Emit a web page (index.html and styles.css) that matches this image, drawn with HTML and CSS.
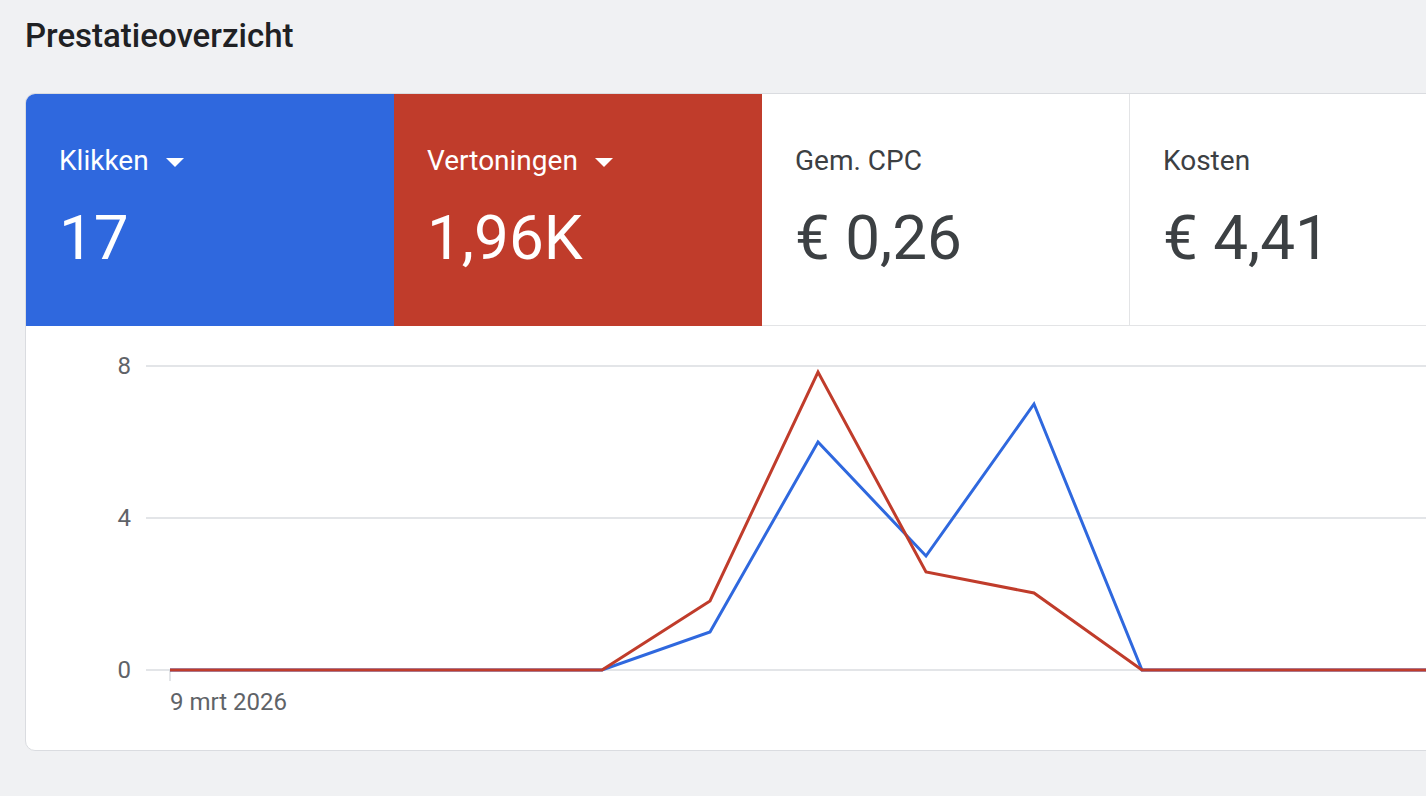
FILE: index.html
```html
<!DOCTYPE html>
<html lang="nl">
<head>
    <meta charset="UTF-8">
    <meta name="viewport" content="width=device-width, initial-scale=1.0">
    <title>Prestatieoverzicht</title>
    <link rel="stylesheet" href="styles.css">
</head>
<body>
    <div class="page">
        <h2 class="page-title">Prestatieoverzicht</h2>
        <div class="overview-card">
            <div class="tiles">
                <div class="tile tile-clicks">
                    <div class="tile-label">Klikken
                        <svg class="caret" width="18" height="9" viewBox="0 0 18 9"><path d="M0 0h18L9 9z" fill="currentColor"/></svg>
                    </div>
                    <div class="tile-value">17</div>
                </div>
                <div class="tile tile-impressions">
                    <div class="tile-label">Vertoningen
                        <svg class="caret" width="18" height="9" viewBox="0 0 18 9"><path d="M0 0h18L9 9z" fill="currentColor"/></svg>
                    </div>
                    <div class="tile-value">1,96K</div>
                </div>
                <div class="tile">
                    <div class="tile-label">Gem. CPC</div>
                    <div class="tile-value">€ 0,26</div>
                </div>
                <div class="tile">
                    <div class="tile-label">Kosten</div>
                    <div class="tile-value">€ 4,41</div>
                </div>
            </div>
            <div class="chart">
                <svg class="chart-svg" width="1600" height="424" viewBox="0 0 1600 424">
                    <g class="grid">
                        <line x1="120" y1="40" x2="1600" y2="40"/>
                        <line x1="120" y1="192" x2="1600" y2="192"/>
                        <line x1="120" y1="344" x2="1600" y2="344"/>
                        <line x1="144" y1="344" x2="144" y2="355"/>
                    </g>
                    <g class="axis-labels">
                        <text x="105" y="48" text-anchor="end">8</text>
                        <text x="105" y="200" text-anchor="end">4</text>
                        <text x="105" y="352" text-anchor="end">0</text>
                        <text x="144" y="384">9 mrt 2026</text>
                    </g>
                    <!-- klikken -->
                    <polyline class="line line-clicks" points="144,344 252,344 360,344 468,344 576,344 684,306 792,116 900,230 1008,78 1116,344 1224,344 1332,344 1440,344 1548,344 1600,344"/>
                    <!-- vertoningen -->
                    <polyline class="line line-impressions" points="144,344 252,344 360,344 468,344 576,344 684,275 792,46 900,246 1008,267 1116,344 1224,344 1332,344 1440,344 1548,344 1600,344"/>
                </svg>
            </div>
        </div>
    </div>
</body>
</html>
```

FILE: styles.css
```css
html, body {
    margin: 0;
    overflow: hidden;
}
body {
    background-color: #f0f1f3;
    font-family: Roboto, "Liberation Sans", sans-serif;
    color: #3c4043;
}
.page {
    padding: 16px 0 0 25px;
}
.page-title {
    margin: 0 0 37px 0;
    font-size: 33px;
    line-height: 40px;
    font-weight: 500;
    color: #202124;
}
.overview-card {
    width: 1600px;
    background-color: #fff;
    border: 1px solid #dadce0;
    border-radius: 10px;
    overflow: hidden;
}
.tiles {
    display: flex;
}
.tile {
    width: 368px;
    height: 232px;
    box-sizing: border-box;
    padding: 49px 0 0 33px;
    border-right: 1px solid #e3e4e6;
    border-bottom: 1px solid #e3e4e6;
    flex-shrink: 0;
}
.tile-clicks {
    background-color: #2f68de;
    color: #fff;
    border: none;
}
.tile-impressions {
    background-color: #c03c2b;
    color: #fff;
    border: none;
}
.tile-label {
    display: flex;
    align-items: center;
    font-size: 28px;
    line-height: 36px;
}
.caret {
    margin-left: 17px;
    margin-top: 3px;
}
.tile-value {
    margin-top: 27px;
    font-size: 62px;
    line-height: 64px;
}
.chart {
    height: 424px;
}
.chart-svg {
    display: block;
}
.grid line {
    stroke: #dadce0;
    stroke-width: 1.5;
}
.axis-labels text {
    font-family: Roboto, "Liberation Sans", sans-serif;
    font-size: 24px;
    fill: #5f6368;
}
.line {
    fill: none;
    stroke-width: 3;
    stroke-linejoin: miter;
}
.line-clicks {
    stroke: #2f68de;
}
.line-impressions {
    stroke: #c03c2b;
}
```
